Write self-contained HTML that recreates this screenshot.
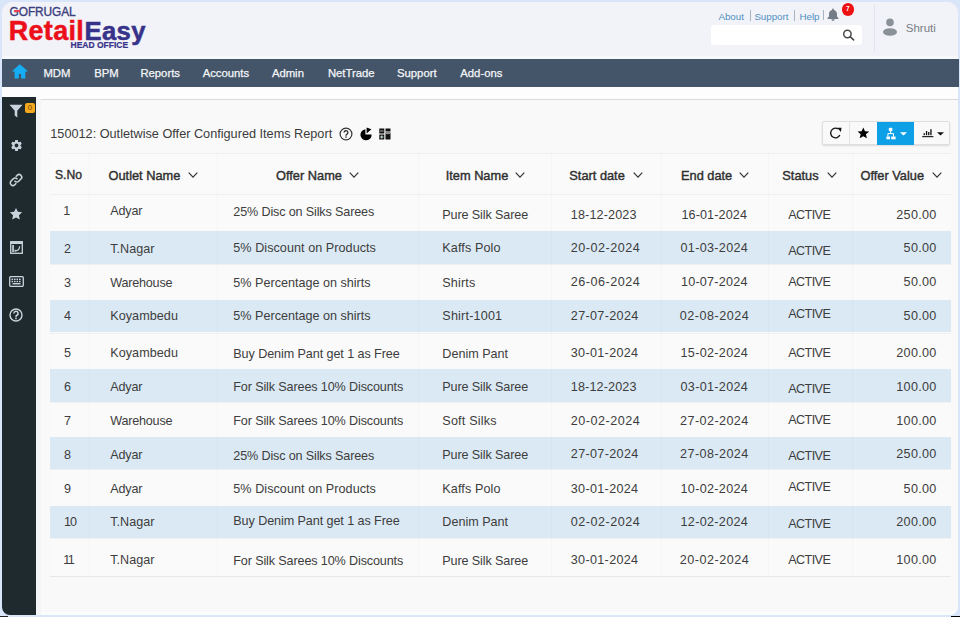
<!DOCTYPE html>
<html><head><meta charset="utf-8">
<style>
*{box-sizing:border-box;margin:0;padding:0}
html,body{width:960px;height:617px;overflow:hidden;background:#d9e5f8}
body{font-family:"Liberation Sans",sans-serif;position:relative}
#frame{position:absolute;left:0;top:0;width:960px;height:617px;background:#d9e5f8;border-radius:10px}
#hdr{position:absolute;left:2px;top:2px;width:956px;height:57px;background:#f2f3f8;border-radius:10px 10px 0 0;border-bottom:3px solid #f6f8fb}
#nav{position:absolute;left:2px;top:59px;width:956.5px;height:28px;background:#44556a}
#band{position:absolute;left:2px;top:87px;width:956px;height:12px;background:#fdfdfe}
#side{position:absolute;left:2px;top:97px;width:34px;height:518px;background:#1f2a2f;border-radius:0 0 0 8px}
#strip{position:absolute;left:36px;top:99px;width:5px;height:516px;background:#f3f5f9}
#content{position:absolute;left:40.5px;top:98.5px;width:917.5px;height:516.5px;background:#f9f9f9;border-top:1.5px solid #d9dadc;border-bottom:3px solid #fbfcfd;border-radius:0 0 8px 0}
.a{position:absolute;white-space:nowrap}
</style></head><body>
<div id="frame"></div>
<div class="a" style="left:951px;top:615.6px;width:9px;height:1.4px;background:#000"></div>
<div class="a" style="left:0;top:616px;width:8px;height:1px;background:#222"></div>
<div id="hdr"></div>
<div class="a" style="left:9.6px;top:4.94px;font-size:11.9px;line-height:14.28px;color:#3b3f7e;font-weight:normal;letter-spacing:-0.1px;-webkit-text-stroke:0.35px #3b3f7e">GOFRUGAL</div>
<div class="a" style="left:14px;top:9.8px;width:5.8px;height:1.8px;background:#e8404e"></div>
<div class="a" style="left:8.8px;top:14.74px;font-size:26.9px;line-height:32.28px;color:#ec0f1a;font-weight:bold;letter-spacing:0.35px;-webkit-text-stroke:0.5px #ec0f1a">Retail</div>
<div class="a" style="left:84.6px;top:15.87px;font-size:25.7px;line-height:30.84px;color:#37328a;font-weight:bold;letter-spacing:0.3px;-webkit-text-stroke:0.5px #37328a">Easy</div>
<div class="a" style="left:70.5px;top:39.85px;font-size:8.5px;line-height:10.2px;color:#37328a;font-weight:bold;-webkit-text-stroke:0.2px #37328a">HEAD OFFICE</div>
<div class="a" style="left:718.4px;top:11.12px;font-size:9.8px;line-height:11.76px;color:#4f8fc2;font-weight:normal;">About</div>
<div class="a" style="left:749.5px;top:10px;width:1px;height:11px;background:#a9b4c2"></div>
<div class="a" style="left:754.4px;top:11.22px;font-size:9.7px;line-height:11.64px;color:#4f8fc2;font-weight:normal;">Support</div>
<div class="a" style="left:793.8px;top:10px;width:1px;height:11px;background:#a9b4c2"></div>
<div class="a" style="left:799.4px;top:11.12px;font-size:9.8px;line-height:11.76px;color:#4f8fc2;font-weight:normal;">Help</div>
<div class="a" style="left:823px;top:10px;width:1px;height:10px;background:#a9b4c2"></div>
<svg class="a" style="left:827px;top:8px" width="12" height="13" viewBox="0 0 12 13"><path d="M6 0.6c.5 0 .9.4.9.9v.5c1.9.4 3.1 2 3.1 3.9v2.6l1.4 1.5v.9H.6v-.9L2 8.5V5.9C2 4 3.2 2.4 5.1 2v-.5c0-.5.4-.9.9-.9z M4.4 11.2h3.2c0 .9-.7 1.6-1.6 1.6s-1.6-.7-1.6-1.6z" fill="#737c87"/></svg>
<div class="a" style="left:841.6px;top:3.2px;width:12.4px;height:12.4px;border-radius:50%;background:#ee1111;color:#fff;font-size:6.5px;font-weight:bold;line-height:12.4px;text-align:center">7</div>
<div class="a" style="left:711px;top:25px;width:151px;height:20px;background:#fff;border-radius:3px"></div>
<svg class="a" style="left:842px;top:29px" width="14" height="13" viewBox="0 0 14 13"><circle cx="5.4" cy="5" r="3.7" stroke="#4a4a4a" stroke-width="1.5" fill="none"/><path d="M8.1 7.7L11.6 10.9" stroke="#4a4a4a" stroke-width="1.7" stroke-linecap="round"/></svg>
<div class="a" style="left:874px;top:4px;width:1px;height:48px;background:#e2e6ec"></div>
<svg class="a" style="left:882px;top:17px" width="16" height="20" viewBox="0 0 16 20"><circle cx="8" cy="5.4" r="3.8" fill="#8a9199"/><ellipse cx="8" cy="15" rx="7" ry="3.8" fill="#8a9199"/></svg>
<div class="a" style="left:905.8px;top:22.42px;font-size:11.5px;line-height:13.8px;color:#777d84;font-weight:normal;">Shruti</div>
<div id="nav"></div>
<svg class="a" style="left:11.5px;top:63.6px" width="16" height="15" viewBox="0 0 16 15"><path d="M7.8 0.3L0.3 7.1l1 1 1.3-1.1V14.4h4.2V10h2.3v4.4h4.2V7l1.3 1.1 1-1z" fill="#15adf3"/></svg>
<div class="a" style="left:43.4px;top:67.20px;font-size:11.3px;line-height:13.56px;color:#f4f6f8;font-weight:normal;-webkit-text-stroke:0.25px #f4f6f8">MDM</div>
<div class="a" style="left:94.3px;top:67.20px;font-size:11.3px;line-height:13.56px;color:#f4f6f8;font-weight:normal;-webkit-text-stroke:0.25px #f4f6f8">BPM</div>
<div class="a" style="left:140.4px;top:67.20px;font-size:11.3px;line-height:13.56px;color:#f4f6f8;font-weight:normal;-webkit-text-stroke:0.25px #f4f6f8">Reports</div>
<div class="a" style="left:202.7px;top:67.20px;font-size:11.3px;line-height:13.56px;color:#f4f6f8;font-weight:normal;-webkit-text-stroke:0.25px #f4f6f8">Accounts</div>
<div class="a" style="left:271.9px;top:67.20px;font-size:11.3px;line-height:13.56px;color:#f4f6f8;font-weight:normal;-webkit-text-stroke:0.25px #f4f6f8">Admin</div>
<div class="a" style="left:327.9px;top:67.20px;font-size:11.3px;line-height:13.56px;color:#f4f6f8;font-weight:normal;-webkit-text-stroke:0.25px #f4f6f8">NetTrade</div>
<div class="a" style="left:397px;top:67.20px;font-size:11.3px;line-height:13.56px;color:#f4f6f8;font-weight:normal;-webkit-text-stroke:0.25px #f4f6f8">Support</div>
<div class="a" style="left:460.3px;top:67.20px;font-size:11.3px;line-height:13.56px;color:#f4f6f8;font-weight:normal;-webkit-text-stroke:0.25px #f4f6f8">Add-ons</div>
<div id="band"></div>
<div id="side"></div>
<svg class="a" style="left:9px;top:104px" width="14" height="14" viewBox="0 0 14 14"><path d="M0.5 0.8h13L8.3 6.8v6.6L5.7 11.6V6.8z" fill="#c9d3dc"/></svg>
<div class="a" style="left:25px;top:102.5px;width:10px;height:10px;background:#f4a81d;border-radius:2px;color:#6a4a10;font-size:8px;line-height:10px;text-align:center">0</div>
<svg class="a" style="left:9.5px;top:139px" width="13" height="13" viewBox="0 0 24 24"><path fill="#c9d3dc" d="M19.4 13c.04-.33.06-.66.06-1s-.02-.67-.06-1l2.1-1.65c.2-.15.25-.42.13-.64l-2-3.46c-.12-.22-.39-.3-.61-.22l-2.49 1c-.52-.4-1.08-.73-1.69-.98l-.38-2.65C14.46 2.18 14.25 2 14 2h-4c-.25 0-.46.18-.49.42l-.38 2.65c-.61.25-1.17.59-1.69.98l-2.49-1c-.23-.09-.49 0-.61.22l-2 3.46c-.13.22-.07.49.12.64L4.57 11c-.04.33-.07.67-.07 1s.03.67.07 1l-2.11 1.65c-.19.15-.24.42-.12.64l2 3.46c.12.22.39.3.61.22l2.49-1c.52.4 1.08.73 1.69.98l.38 2.65c.03.24.24.42.49.42h4c.25 0 .46-.18.49-.42l.38-2.65c.61-.25 1.17-.59 1.69-.98l2.49 1c.23.09.49 0 .61-.22l2-3.46c.12-.22.07-.49-.12-.64L19.4 13zM12 15.5c-1.93 0-3.5-1.57-3.5-3.5s1.57-3.5 3.5-3.5 3.5 1.57 3.5 3.5-1.57 3.5-3.5 3.5z"/></svg>
<svg class="a" style="left:9px;top:173px" width="14" height="14" viewBox="0 0 14 14"><g fill="none" stroke="#c9d3dc" stroke-width="1.6" stroke-linecap="round"><path d="M6 8.2a2.6 2.6 0 0 0 3.7 0l2.2-2.2a2.6 2.6 0 0 0-3.7-3.7l-1 1"/><path d="M8 5.8a2.6 2.6 0 0 0-3.7 0L2.1 8a2.6 2.6 0 0 0 3.7 3.7l1-1"/></g></svg>
<svg class="a" style="left:9px;top:207px" width="14" height="14" viewBox="0 0 24 24"><path fill="#c9d3dc" d="M12 1.5l3.2 6.8 7.3.9-5.4 5 1.4 7.3L12 17.9l-6.5 3.6 1.4-7.3-5.4-5 7.3-.9z"/></svg>
<svg class="a" style="left:10px;top:241px" width="13" height="13" viewBox="0 0 13 13"><rect x="0.7" y="0.7" width="11.6" height="11.6" fill="none" stroke="#c9d3dc" stroke-width="1.3"/><rect x="0.7" y="1" width="11.6" height="2" fill="#c9d3dc"/><rect x="2.2" y="4" width="1.7" height="7" fill="#c9d3dc"/><path d="M9.6 5.2c0 2.6-1.4 4.4-4.2 4.6" fill="none" stroke="#c9d3dc" stroke-width="1.2"/><path d="M4.6 8.2v3l2.2-1.5z" fill="#c9d3dc"/></svg>
<svg class="a" style="left:9px;top:276px" width="15" height="11" viewBox="0 0 15 11"><rect x="0.7" y="0.7" width="13.6" height="9.6" rx="1" fill="none" stroke="#c9d3dc" stroke-width="1.3"/><g fill="#c9d3dc"><rect x="2.5" y="2.6" width="1.6" height="1.4"/><rect x="5" y="2.6" width="1.6" height="1.4"/><rect x="7.5" y="2.6" width="1.6" height="1.4"/><rect x="10" y="2.6" width="1.6" height="1.4"/><rect x="2.5" y="4.8" width="1.6" height="1.4"/><rect x="5" y="4.8" width="1.6" height="1.4"/><rect x="7.5" y="4.8" width="1.6" height="1.4"/><rect x="10" y="4.8" width="1.6" height="1.4"/><rect x="3.5" y="7" width="8" height="1.4"/></g></svg>
<svg class="a" style="left:9px;top:308px" width="14" height="14" viewBox="0 0 14 14"><circle cx="7" cy="7" r="6" fill="none" stroke="#c9d3dc" stroke-width="1.4"/><path d="M4.9 5.4a2.1 2.1 0 1 1 3 1.9c-.6.3-.9.7-.9 1.3v.4" fill="none" stroke="#c9d3dc" stroke-width="1.5"/><circle cx="7" cy="10.4" r="0.9" fill="#c9d3dc"/></svg>
<div id="strip"></div><div id="content"></div>
<div class="a" style="left:50.3px;top:127.38px;font-size:12.7px;line-height:15.24px;color:#3b3b3b;font-weight:normal;">150012: Outletwise Offer Configured Items Report</div>
<svg class="a" style="left:339px;top:127px" width="14" height="14" viewBox="0 0 14 14"><circle cx="7" cy="7" r="5.9" fill="none" stroke="#333" stroke-width="1.2"/><path d="M5.1 5.6a1.9 1.9 0 1 1 2.7 1.7c-.5.25-.8.6-.8 1.1v.3" fill="none" stroke="#333" stroke-width="1.4"/><circle cx="7" cy="10" r="0.85" fill="#333"/></svg>
<svg class="a" style="left:359px;top:126px" width="14" height="15" viewBox="0 0 14 15"><path d="M6.4 3.2A5.6 5.6 0 1 0 12.6 8.4H6.4z" fill="#000"/><path d="M7.6 1.6l4.8 1.6-4.8 4.4z" fill="#000"/></svg>
<svg class="a" style="left:379px;top:128px" width="12" height="12" viewBox="0 0 12 12"><rect x="0.3" y="0.5" width="5" height="5" fill="#111"/><rect x="6.5" y="0.5" width="5" height="3" fill="#111"/><rect x="6.5" y="4.5" width="5" height="7" fill="#111"/><rect x="0.3" y="6.5" width="5" height="5" fill="#111"/><rect x="1" y="2.6" width="3.6" height="0.8" fill="#ccc"/><rect x="7" y="5.3" width="4" height="0.8" fill="#ccc"/><path d="M1.2 9h3.2M2.8 7.4v3.2" stroke="#dfe" stroke-width="0.9"/></svg>
<div class="a" style="left:821.5px;top:121px;width:128.5px;height:24px;background:#f9f9f9;border:1px solid #dedede;border-radius:2px;box-shadow:0 1px 2px rgba(0,0,0,0.12)"></div>
<div class="a" style="left:849px;top:122px;width:1px;height:22px;background:#e3e3e3"></div>
<div class="a" style="left:877px;top:122px;width:36.8px;height:22.8px;background:#0ea0e6"></div>
<svg class="a" style="left:828px;top:126.3px" width="15" height="14" viewBox="0 0 15 14"><path d="M11.85 9.03A4.8 4.8 0 1 1 9.9 2.84" fill="none" stroke="#111" stroke-width="1.3"/><path d="M9.2 1.8l4.3-.1-.6 4.3z" fill="#111"/></svg>
<svg class="a" style="left:856.8px;top:126.8px" width="12.6" height="12.6" viewBox="0 0 24 24"><path fill="#000" d="M12 1l3.2 7.2 7.8.6-6 5.1 1.9 7.6L12 17.4l-6.9 4.1 1.9-7.6-6-5.1 7.8-.6z"/></svg>
<svg class="a" style="left:886px;top:126.5px" width="10" height="13" viewBox="0 0 10 13"><g fill="#fff"><rect x="2.8" y="0.7" width="3.6" height="3.5" rx="1"/><rect x="0.4" y="9.5" width="3.6" height="2.8"/><rect x="5.2" y="9.5" width="4.4" height="2.8"/></g><path d="M4.6 4.2v2.4M1.9 9.5V6.6h5.6v2.9" fill="none" stroke="#fff" stroke-width="1"/></svg>
<svg class="a" style="left:899.5px;top:131.6px" width="7" height="4" viewBox="0 0 7 4"><path d="M0 0.2h7L3.5 3.6z" fill="#fff"/></svg>
<svg class="a" style="left:922px;top:128px" width="12" height="10" viewBox="0 0 12 10"><g fill="#111"><rect x="1.6" y="5.2" width="1.3" height="2"/><rect x="3.9" y="3" width="1.3" height="4.2"/><rect x="6.1" y="4" width="1.3" height="3.2"/><rect x="8.3" y="1.2" width="1.3" height="6"/><rect x="0.2" y="8.1" width="11.2" height="1.1"/></g></svg>
<svg class="a" style="left:936.5px;top:131.6px" width="7" height="4" viewBox="0 0 7 4"><path d="M0 0.2h7L3.5 3.6z" fill="#111"/></svg>
<div class="a" style="left:50px;top:153px;width:901px;height:423.70000000000005px;background:#fafafa;border-top:1px solid #eceef0;border-bottom:1px solid #e6e8ea"></div>
<div class="a" style="left:50px;top:193.5px;width:901px;height:1px;background:#eef0f2"></div>
<div class="a" style="left:50px;top:230.8px;width:901px;height:33.099999999999966px;background:#dbe9f4"></div>
<div class="a" style="left:50px;top:263.9px;width:901px;height:1px;background:#eef0f2"></div>
<div class="a" style="left:50px;top:299.8px;width:901px;height:32.69999999999999px;background:#dbe9f4"></div>
<div class="a" style="left:50px;top:332.5px;width:901px;height:1px;background:#eef0f2"></div>
<div class="a" style="left:50px;top:369px;width:901px;height:32.60000000000002px;background:#dbe9f4"></div>
<div class="a" style="left:50px;top:401.6px;width:901px;height:1px;background:#eef0f2"></div>
<div class="a" style="left:50px;top:436.8px;width:901px;height:32.5px;background:#dbe9f4"></div>
<div class="a" style="left:50px;top:469.3px;width:901px;height:1px;background:#eef0f2"></div>
<div class="a" style="left:50px;top:505.9px;width:901px;height:32.30000000000007px;background:#dbe9f4"></div>
<div class="a" style="left:50px;top:538.2px;width:901px;height:1px;background:#eef0f2"></div>
<div class="a" style="left:88.7px;top:153px;width:1px;height:423.70000000000005px;background:rgba(0,0,0,0.018)"></div>
<div class="a" style="left:216.9px;top:153px;width:1px;height:423.70000000000005px;background:rgba(0,0,0,0.018)"></div>
<div class="a" style="left:418.3px;top:153px;width:1px;height:423.70000000000005px;background:rgba(0,0,0,0.018)"></div>
<div class="a" style="left:550.5px;top:153px;width:1px;height:423.70000000000005px;background:rgba(0,0,0,0.018)"></div>
<div class="a" style="left:661px;top:153px;width:1px;height:423.70000000000005px;background:rgba(0,0,0,0.018)"></div>
<div class="a" style="left:767.5px;top:153px;width:1px;height:423.70000000000005px;background:rgba(0,0,0,0.018)"></div>
<div class="a" style="left:852px;top:153px;width:1px;height:423.70000000000005px;background:rgba(0,0,0,0.018)"></div>
<div class="a" style="left:55px;top:168.20px;font-size:12.15px;line-height:14.58px;color:#2f2f2f;font-weight:normal;-webkit-text-stroke:0.4px #2f2f2f">S.No</div>
<div class="a" style="left:108.5px;top:167.58px;font-size:12.8px;line-height:15.36px;color:#2f2f2f;font-weight:normal;-webkit-text-stroke:0.4px #2f2f2f">Outlet Name</div>
<svg class="a" style="left:188px;top:172px" width="10" height="6" viewBox="0 0 10 6"><path d="M0.7 0.7L5 5.1 9.3 0.7" fill="none" stroke="#333" stroke-width="1.2"/></svg>
<div class="a" style="left:276px;top:167.58px;font-size:12.8px;line-height:15.36px;color:#2f2f2f;font-weight:normal;-webkit-text-stroke:0.4px #2f2f2f">Offer Name</div>
<svg class="a" style="left:349px;top:172px" width="10" height="6" viewBox="0 0 10 6"><path d="M0.7 0.7L5 5.1 9.3 0.7" fill="none" stroke="#333" stroke-width="1.2"/></svg>
<div class="a" style="left:445.7px;top:167.58px;font-size:12.8px;line-height:15.36px;color:#2f2f2f;font-weight:normal;-webkit-text-stroke:0.4px #2f2f2f">Item Name</div>
<svg class="a" style="left:515px;top:172px" width="10" height="6" viewBox="0 0 10 6"><path d="M0.7 0.7L5 5.1 9.3 0.7" fill="none" stroke="#333" stroke-width="1.2"/></svg>
<div class="a" style="left:569.3px;top:167.58px;font-size:12.8px;line-height:15.36px;color:#2f2f2f;font-weight:normal;-webkit-text-stroke:0.4px #2f2f2f">Start date</div>
<svg class="a" style="left:632.5px;top:172px" width="10" height="6" viewBox="0 0 10 6"><path d="M0.7 0.7L5 5.1 9.3 0.7" fill="none" stroke="#333" stroke-width="1.2"/></svg>
<div class="a" style="left:681px;top:167.58px;font-size:12.8px;line-height:15.36px;color:#2f2f2f;font-weight:normal;-webkit-text-stroke:0.4px #2f2f2f">End date</div>
<svg class="a" style="left:738.5px;top:172px" width="10" height="6" viewBox="0 0 10 6"><path d="M0.7 0.7L5 5.1 9.3 0.7" fill="none" stroke="#333" stroke-width="1.2"/></svg>
<div class="a" style="left:782.3px;top:167.58px;font-size:12.8px;line-height:15.36px;color:#2f2f2f;font-weight:normal;-webkit-text-stroke:0.4px #2f2f2f">Status</div>
<svg class="a" style="left:826.8px;top:172px" width="10" height="6" viewBox="0 0 10 6"><path d="M0.7 0.7L5 5.1 9.3 0.7" fill="none" stroke="#333" stroke-width="1.2"/></svg>
<div class="a" style="left:860.5px;top:167.58px;font-size:12.8px;line-height:15.36px;color:#2f2f2f;font-weight:normal;-webkit-text-stroke:0.4px #2f2f2f">Offer Value</div>
<svg class="a" style="left:931.8px;top:172px" width="10" height="6" viewBox="0 0 10 6"><path d="M0.7 0.7L5 5.1 9.3 0.7" fill="none" stroke="#333" stroke-width="1.2"/></svg>
<div class="a" style="left:63.2px;top:204.37px;font-size:12.6px;line-height:15.12px;color:#3d3d3d;font-weight:normal;letter-spacing:0px">1</div>
<div class="a" style="left:110.2px;top:204.37px;font-size:12.6px;line-height:15.12px;color:#3d3d3d;font-weight:normal;letter-spacing:-0.15px">Adyar</div>
<div class="a" style="left:233.3px;top:205.47px;font-size:12.6px;line-height:15.12px;color:#3d3d3d;font-weight:normal;letter-spacing:-0.143px">25% Disc on Silks Sarees</div>
<div class="a" style="left:442.3px;top:208.07px;font-size:12.6px;line-height:15.12px;color:#3d3d3d;font-weight:normal;letter-spacing:-0.114px">Pure Silk Saree</div>
<div class="a" style="left:570.8px;top:207.97px;font-size:12.6px;line-height:15.12px;color:#3d3d3d;font-weight:normal;letter-spacing:0.132px">18-12-2023</div>
<div class="a" style="left:654.2661111111112px;width:120px;text-align:center;top:207.97px;font-size:12.6px;line-height:15.12px;color:#3d3d3d;font-weight:normal;letter-spacing:0.132px">16-01-2024</div>
<div class="a" style="left:788.3px;top:207.97px;font-size:12.6px;line-height:15.12px;color:#3d3d3d;font-weight:normal;letter-spacing:-0.59px">ACTIVE</div>
<div class="a" style="right:23.399999999999977px;top:207.97px;font-size:12.6px;line-height:15.12px;color:#3d3d3d;font-weight:normal;letter-spacing:0.3px">250.00</div>
<div class="a" style="left:64px;top:241.97px;font-size:12.6px;line-height:15.12px;color:#3d3d3d;font-weight:normal;letter-spacing:0px">2</div>
<div class="a" style="left:110.2px;top:241.97px;font-size:12.6px;line-height:15.12px;color:#3d3d3d;font-weight:normal;letter-spacing:0.033px">T.Nagar</div>
<div class="a" style="left:233.3px;top:241.07px;font-size:12.6px;line-height:15.12px;color:#3d3d3d;font-weight:normal;letter-spacing:0.055px">5% Discount on Products</div>
<div class="a" style="left:442.3px;top:241.07px;font-size:12.6px;line-height:15.12px;color:#3d3d3d;font-weight:normal;letter-spacing:0.111px">Kaffs Polo</div>
<div class="a" style="left:570.8px;top:241.27px;font-size:12.6px;line-height:15.12px;color:#3d3d3d;font-weight:normal;letter-spacing:0.510px">20-02-2024</div>
<div class="a" style="left:654.3605555555556px;width:120px;text-align:center;top:241.27px;font-size:12.6px;line-height:15.12px;color:#3d3d3d;font-weight:normal;letter-spacing:0.321px">01-03-2024</div>
<div class="a" style="left:788.3px;top:244.17px;font-size:12.6px;line-height:15.12px;color:#3d3d3d;font-weight:normal;letter-spacing:-0.59px">ACTIVE</div>
<div class="a" style="right:23.399999999999977px;top:241.27px;font-size:12.6px;line-height:15.12px;color:#3d3d3d;font-weight:normal;letter-spacing:0.3px">50.00</div>
<div class="a" style="left:64px;top:275.67px;font-size:12.6px;line-height:15.12px;color:#3d3d3d;font-weight:normal;letter-spacing:0px">3</div>
<div class="a" style="left:110.2px;top:275.67px;font-size:12.6px;line-height:15.12px;color:#3d3d3d;font-weight:normal;letter-spacing:-0.2px">Warehouse</div>
<div class="a" style="left:233.3px;top:276.07px;font-size:12.6px;line-height:15.12px;color:#3d3d3d;font-weight:normal;letter-spacing:0.005px">5% Percentage on shirts</div>
<div class="a" style="left:442.3px;top:276.07px;font-size:12.6px;line-height:15.12px;color:#3d3d3d;font-weight:normal;letter-spacing:0.14px">Shirts</div>
<div class="a" style="left:570.8px;top:275.47px;font-size:12.6px;line-height:15.12px;color:#3d3d3d;font-weight:normal;letter-spacing:0.510px">26-06-2024</div>
<div class="a" style="left:654.318888888889px;width:120px;text-align:center;top:275.47px;font-size:12.6px;line-height:15.12px;color:#3d3d3d;font-weight:normal;letter-spacing:0.238px">10-07-2024</div>
<div class="a" style="left:788.3px;top:275.47px;font-size:12.6px;line-height:15.12px;color:#3d3d3d;font-weight:normal;letter-spacing:-0.59px">ACTIVE</div>
<div class="a" style="right:23.399999999999977px;top:275.47px;font-size:12.6px;line-height:15.12px;color:#3d3d3d;font-weight:normal;letter-spacing:0.3px">50.00</div>
<div class="a" style="left:64px;top:309.27px;font-size:12.6px;line-height:15.12px;color:#3d3d3d;font-weight:normal;letter-spacing:0px">4</div>
<div class="a" style="left:110.2px;top:309.27px;font-size:12.6px;line-height:15.12px;color:#3d3d3d;font-weight:normal;letter-spacing:0.062px">Koyambedu</div>
<div class="a" style="left:233.3px;top:308.77px;font-size:12.6px;line-height:15.12px;color:#3d3d3d;font-weight:normal;letter-spacing:0.005px">5% Percentage on shirts</div>
<div class="a" style="left:442.3px;top:308.77px;font-size:12.6px;line-height:15.12px;color:#3d3d3d;font-weight:normal;letter-spacing:0.189px">Shirt-1001</div>
<div class="a" style="left:570.8px;top:308.77px;font-size:12.6px;line-height:15.12px;color:#3d3d3d;font-weight:normal;letter-spacing:0.343px">27-07-2024</div>
<div class="a" style="left:654.455px;width:120px;text-align:center;top:308.77px;font-size:12.6px;line-height:15.12px;color:#3d3d3d;font-weight:normal;letter-spacing:0.510px">02-08-2024</div>
<div class="a" style="left:788.3px;top:306.77px;font-size:12.6px;line-height:15.12px;color:#3d3d3d;font-weight:normal;letter-spacing:-0.59px">ACTIVE</div>
<div class="a" style="right:23.399999999999977px;top:308.77px;font-size:12.6px;line-height:15.12px;color:#3d3d3d;font-weight:normal;letter-spacing:0.3px">50.00</div>
<div class="a" style="left:64px;top:345.57px;font-size:12.6px;line-height:15.12px;color:#3d3d3d;font-weight:normal;letter-spacing:0px">5</div>
<div class="a" style="left:110.2px;top:345.57px;font-size:12.6px;line-height:15.12px;color:#3d3d3d;font-weight:normal;letter-spacing:0.062px">Koyambedu</div>
<div class="a" style="left:233.3px;top:347.07px;font-size:12.6px;line-height:15.12px;color:#3d3d3d;font-weight:normal;letter-spacing:-0.085px">Buy Denim Pant get 1 as Free</div>
<div class="a" style="left:442.3px;top:347.07px;font-size:12.6px;line-height:15.12px;color:#3d3d3d;font-weight:normal;letter-spacing:0.0px">Denim Pant</div>
<div class="a" style="left:570.8px;top:346.27px;font-size:12.6px;line-height:15.12px;color:#3d3d3d;font-weight:normal;letter-spacing:0.321px">30-01-2024</div>
<div class="a" style="left:654.3605555555556px;width:120px;text-align:center;top:346.27px;font-size:12.6px;line-height:15.12px;color:#3d3d3d;font-weight:normal;letter-spacing:0.321px">15-02-2024</div>
<div class="a" style="left:788.3px;top:346.27px;font-size:12.6px;line-height:15.12px;color:#3d3d3d;font-weight:normal;letter-spacing:-0.59px">ACTIVE</div>
<div class="a" style="right:23.399999999999977px;top:346.27px;font-size:12.6px;line-height:15.12px;color:#3d3d3d;font-weight:normal;letter-spacing:0.3px">200.00</div>
<div class="a" style="left:64px;top:380.27px;font-size:12.6px;line-height:15.12px;color:#3d3d3d;font-weight:normal;letter-spacing:0px">6</div>
<div class="a" style="left:110.2px;top:380.27px;font-size:12.6px;line-height:15.12px;color:#3d3d3d;font-weight:normal;letter-spacing:-0.15px">Adyar</div>
<div class="a" style="left:233.3px;top:380.47px;font-size:12.6px;line-height:15.12px;color:#3d3d3d;font-weight:normal;letter-spacing:-0.129px">For Silk Sarees 10% Discounts</div>
<div class="a" style="left:442.3px;top:380.47px;font-size:12.6px;line-height:15.12px;color:#3d3d3d;font-weight:normal;letter-spacing:-0.114px">Pure Silk Saree</div>
<div class="a" style="left:570.8px;top:380.47px;font-size:12.6px;line-height:15.12px;color:#3d3d3d;font-weight:normal;letter-spacing:0.132px">18-12-2023</div>
<div class="a" style="left:654.3605555555556px;width:120px;text-align:center;top:380.47px;font-size:12.6px;line-height:15.12px;color:#3d3d3d;font-weight:normal;letter-spacing:0.321px">03-01-2024</div>
<div class="a" style="left:788.3px;top:382.07px;font-size:12.6px;line-height:15.12px;color:#3d3d3d;font-weight:normal;letter-spacing:-0.59px">ACTIVE</div>
<div class="a" style="right:23.399999999999977px;top:380.47px;font-size:12.6px;line-height:15.12px;color:#3d3d3d;font-weight:normal;letter-spacing:0.3px">100.00</div>
<div class="a" style="left:64px;top:414.07px;font-size:12.6px;line-height:15.12px;color:#3d3d3d;font-weight:normal;letter-spacing:0px">7</div>
<div class="a" style="left:110.2px;top:414.07px;font-size:12.6px;line-height:15.12px;color:#3d3d3d;font-weight:normal;letter-spacing:-0.2px">Warehouse</div>
<div class="a" style="left:233.3px;top:414.47px;font-size:12.6px;line-height:15.12px;color:#3d3d3d;font-weight:normal;letter-spacing:-0.129px">For Silk Sarees 10% Discounts</div>
<div class="a" style="left:442.3px;top:414.47px;font-size:12.6px;line-height:15.12px;color:#3d3d3d;font-weight:normal;letter-spacing:0.189px">Soft Silks</div>
<div class="a" style="left:570.8px;top:413.77px;font-size:12.6px;line-height:15.12px;color:#3d3d3d;font-weight:normal;letter-spacing:0.510px">20-02-2024</div>
<div class="a" style="left:654.4133333333334px;width:120px;text-align:center;top:413.77px;font-size:12.6px;line-height:15.12px;color:#3d3d3d;font-weight:normal;letter-spacing:0.427px">27-02-2024</div>
<div class="a" style="left:788.3px;top:412.52px;font-size:12.6px;line-height:15.12px;color:#3d3d3d;font-weight:normal;letter-spacing:-0.59px">ACTIVE</div>
<div class="a" style="right:23.399999999999977px;top:413.77px;font-size:12.6px;line-height:15.12px;color:#3d3d3d;font-weight:normal;letter-spacing:0.3px">100.00</div>
<div class="a" style="left:64px;top:448.47px;font-size:12.6px;line-height:15.12px;color:#3d3d3d;font-weight:normal;letter-spacing:0px">8</div>
<div class="a" style="left:110.2px;top:448.47px;font-size:12.6px;line-height:15.12px;color:#3d3d3d;font-weight:normal;letter-spacing:-0.15px">Adyar</div>
<div class="a" style="left:233.3px;top:448.77px;font-size:12.6px;line-height:15.12px;color:#3d3d3d;font-weight:normal;letter-spacing:-0.143px">25% Disc on Silks Sarees</div>
<div class="a" style="left:442.3px;top:447.77px;font-size:12.6px;line-height:15.12px;color:#3d3d3d;font-weight:normal;letter-spacing:-0.114px">Pure Silk Saree</div>
<div class="a" style="left:570.8px;top:447.07px;font-size:12.6px;line-height:15.12px;color:#3d3d3d;font-weight:normal;letter-spacing:0.343px">27-07-2024</div>
<div class="a" style="left:654.4133333333334px;width:120px;text-align:center;top:447.07px;font-size:12.6px;line-height:15.12px;color:#3d3d3d;font-weight:normal;letter-spacing:0.427px">27-08-2024</div>
<div class="a" style="left:788.3px;top:449.17px;font-size:12.6px;line-height:15.12px;color:#3d3d3d;font-weight:normal;letter-spacing:-0.59px">ACTIVE</div>
<div class="a" style="right:23.399999999999977px;top:447.07px;font-size:12.6px;line-height:15.12px;color:#3d3d3d;font-weight:normal;letter-spacing:0.3px">250.00</div>
<div class="a" style="left:64px;top:482.17px;font-size:12.6px;line-height:15.12px;color:#3d3d3d;font-weight:normal;letter-spacing:0px">9</div>
<div class="a" style="left:110.2px;top:482.17px;font-size:12.6px;line-height:15.12px;color:#3d3d3d;font-weight:normal;letter-spacing:-0.15px">Adyar</div>
<div class="a" style="left:233.3px;top:482.47px;font-size:12.6px;line-height:15.12px;color:#3d3d3d;font-weight:normal;letter-spacing:0.055px">5% Discount on Products</div>
<div class="a" style="left:442.3px;top:482.47px;font-size:12.6px;line-height:15.12px;color:#3d3d3d;font-weight:normal;letter-spacing:0.111px">Kaffs Polo</div>
<div class="a" style="left:570.8px;top:481.77px;font-size:12.6px;line-height:15.12px;color:#3d3d3d;font-weight:normal;letter-spacing:0.321px">30-01-2024</div>
<div class="a" style="left:654.3605555555556px;width:120px;text-align:center;top:481.77px;font-size:12.6px;line-height:15.12px;color:#3d3d3d;font-weight:normal;letter-spacing:0.321px">10-02-2024</div>
<div class="a" style="left:788.3px;top:480.47px;font-size:12.6px;line-height:15.12px;color:#3d3d3d;font-weight:normal;letter-spacing:-0.59px">ACTIVE</div>
<div class="a" style="right:23.399999999999977px;top:481.77px;font-size:12.6px;line-height:15.12px;color:#3d3d3d;font-weight:normal;letter-spacing:0.3px">50.00</div>
<div class="a" style="left:64px;top:515.47px;font-size:12.6px;line-height:15.12px;color:#3d3d3d;font-weight:normal;letter-spacing:-1.1px">10</div>
<div class="a" style="left:110.2px;top:515.47px;font-size:12.6px;line-height:15.12px;color:#3d3d3d;font-weight:normal;letter-spacing:0.033px">T.Nagar</div>
<div class="a" style="left:233.3px;top:514.47px;font-size:12.6px;line-height:15.12px;color:#3d3d3d;font-weight:normal;letter-spacing:-0.085px">Buy Denim Pant get 1 as Free</div>
<div class="a" style="left:442.3px;top:515.47px;font-size:12.6px;line-height:15.12px;color:#3d3d3d;font-weight:normal;letter-spacing:0.0px">Denim Pant</div>
<div class="a" style="left:570.8px;top:515.02px;font-size:12.6px;line-height:15.12px;color:#3d3d3d;font-weight:normal;letter-spacing:0.510px">02-02-2024</div>
<div class="a" style="left:654.3605555555556px;width:120px;text-align:center;top:515.02px;font-size:12.6px;line-height:15.12px;color:#3d3d3d;font-weight:normal;letter-spacing:0.321px">12-02-2024</div>
<div class="a" style="left:788.3px;top:516.77px;font-size:12.6px;line-height:15.12px;color:#3d3d3d;font-weight:normal;letter-spacing:-0.59px">ACTIVE</div>
<div class="a" style="right:23.399999999999977px;top:515.02px;font-size:12.6px;line-height:15.12px;color:#3d3d3d;font-weight:normal;letter-spacing:0.3px">200.00</div>
<div class="a" style="left:63.2px;top:553.37px;font-size:12.6px;line-height:15.12px;color:#3d3d3d;font-weight:normal;letter-spacing:-1.6px">11</div>
<div class="a" style="left:110.2px;top:553.37px;font-size:12.6px;line-height:15.12px;color:#3d3d3d;font-weight:normal;letter-spacing:0.033px">T.Nagar</div>
<div class="a" style="left:233.3px;top:553.77px;font-size:12.6px;line-height:15.12px;color:#3d3d3d;font-weight:normal;letter-spacing:-0.129px">For Silk Sarees 10% Discounts</div>
<div class="a" style="left:442.3px;top:553.77px;font-size:12.6px;line-height:15.12px;color:#3d3d3d;font-weight:normal;letter-spacing:-0.114px">Pure Silk Saree</div>
<div class="a" style="left:570.8px;top:553.37px;font-size:12.6px;line-height:15.12px;color:#3d3d3d;font-weight:normal;letter-spacing:0.321px">30-01-2024</div>
<div class="a" style="left:654.455px;width:120px;text-align:center;top:553.37px;font-size:12.6px;line-height:15.12px;color:#3d3d3d;font-weight:normal;letter-spacing:0.510px">20-02-2024</div>
<div class="a" style="left:788.3px;top:553.37px;font-size:12.6px;line-height:15.12px;color:#3d3d3d;font-weight:normal;letter-spacing:-0.59px">ACTIVE</div>
<div class="a" style="right:23.399999999999977px;top:553.37px;font-size:12.6px;line-height:15.12px;color:#3d3d3d;font-weight:normal;letter-spacing:0.3px">100.00</div>
</body></html>
